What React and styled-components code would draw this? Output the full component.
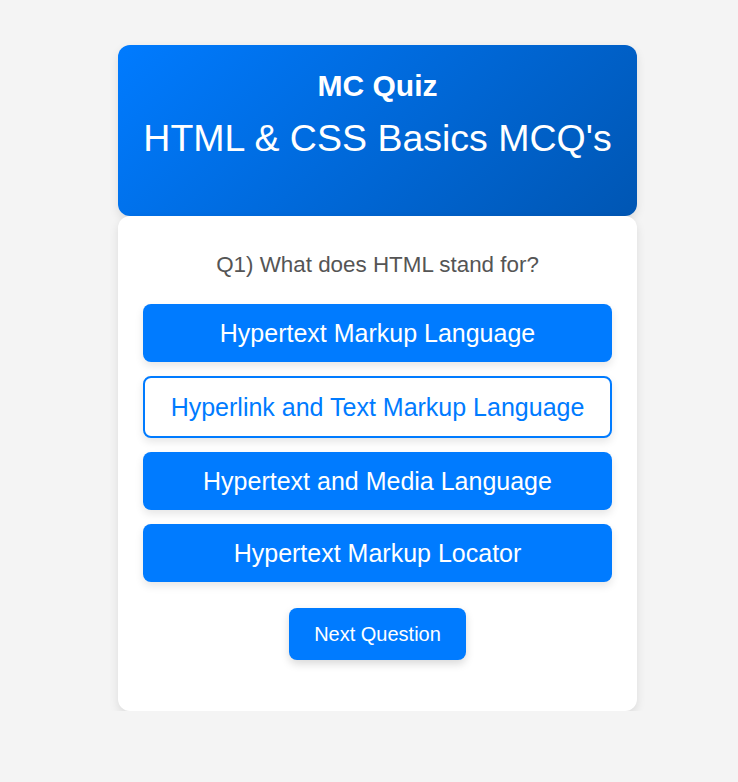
import React from "react";
import styled, { createGlobalStyle } from "styled-components";

const GlobalStyle = createGlobalStyle`
  body {
    margin: 0;
    background: #f4f4f4;
    font-family: "Liberation Sans", Arial, sans-serif;
  }
`;

const options = [
  { label: "Hypertext Markup Language" },
  { label: "Hyperlink and Text Markup Language", outline: true },
  { label: "Hypertext and Media Language" },
  { label: "Hypertext Markup Locator" },
];

export default function App() {
  return (
    <>
      <GlobalStyle />
      <Page>
        <Quiz>
          <Header>
            <Brand>MC Quiz</Brand>
            <Title>HTML &amp; CSS Basics MCQ's</Title>
          </Header>
          <Body>
            <Question>Q1) What does HTML stand for?</Question>
            <OptionList>
              {options.map((o) => (
                <Option key={o.label} outline={o.outline}>
                  {o.label}
                </Option>
              ))}
            </OptionList>
            <NextButton>Next Question</NextButton>
          </Body>
        </Quiz>
      </Page>
    </>
  );
}

const Page = styled.div`
  display: flex;
  justify-content: center;
  padding: 45px 0 0 17px;
`;

const Quiz = styled.div`
  width: 519px;
  display: flex;
  flex-direction: column;
`;

const Header = styled.header`
  background: linear-gradient(135deg, #007bff, #0056b3);
  color: #fff;
  border-radius: 12px;
  box-shadow: 0 4px 10px rgba(0, 0, 0, 0.1);
  text-align: center;
  padding: 24px 20px 56px;
`;

const Brand = styled.h1`
  margin: 0;
  font-size: 30px;
  line-height: 34px;
  font-weight: 700;
`;

const Title = styled.h2`
  margin: 13px 0 0;
  font-size: 37.5px;
  line-height: 44px;
  font-weight: 400;
`;

const Body = styled.main`
  background: #fff;
  border-radius: 12px;
  box-shadow: 0 4px 10px rgba(0, 0, 0, 0.1);
  padding: 37px 25px 51px;
  display: flex;
  flex-direction: column;
  align-items: center;
`;

const Question = styled.p`
  margin: 0 0 27px;
  font-size: 22.4px;
  line-height: 24px;
  color: #555;
`;

const OptionList = styled.div`
  width: 100%;
  display: flex;
  flex-direction: column;
  gap: 14px;
`;

const Option = styled.button.withConfig({
  shouldForwardProp: (p) => p !== "outline",
})`
  width: 100%;
  font-family: inherit;
  font-size: 25px;
  line-height: 26px;
  padding: 16px 10px;
  border-radius: 8px;
  cursor: pointer;
  box-shadow: 0 4px 8px rgba(0, 0, 0, 0.1);
  background: ${(p) => (p.outline ? "#fff" : "#007bff")};
  color: ${(p) => (p.outline ? "#007bff" : "#fff")};
  border: ${(p) => (p.outline ? "2px solid #007bff" : "none")};
`;

const NextButton = styled.button`
  margin-top: 26px;
  width: 177px;
  height: 52px;
  font-family: inherit;
  font-size: 20px;
  color: #fff;
  background: #007bff;
  border: none;
  border-radius: 8px;
  box-shadow: 0 4px 8px rgba(0, 0, 0, 0.15);
  cursor: pointer;
`;
